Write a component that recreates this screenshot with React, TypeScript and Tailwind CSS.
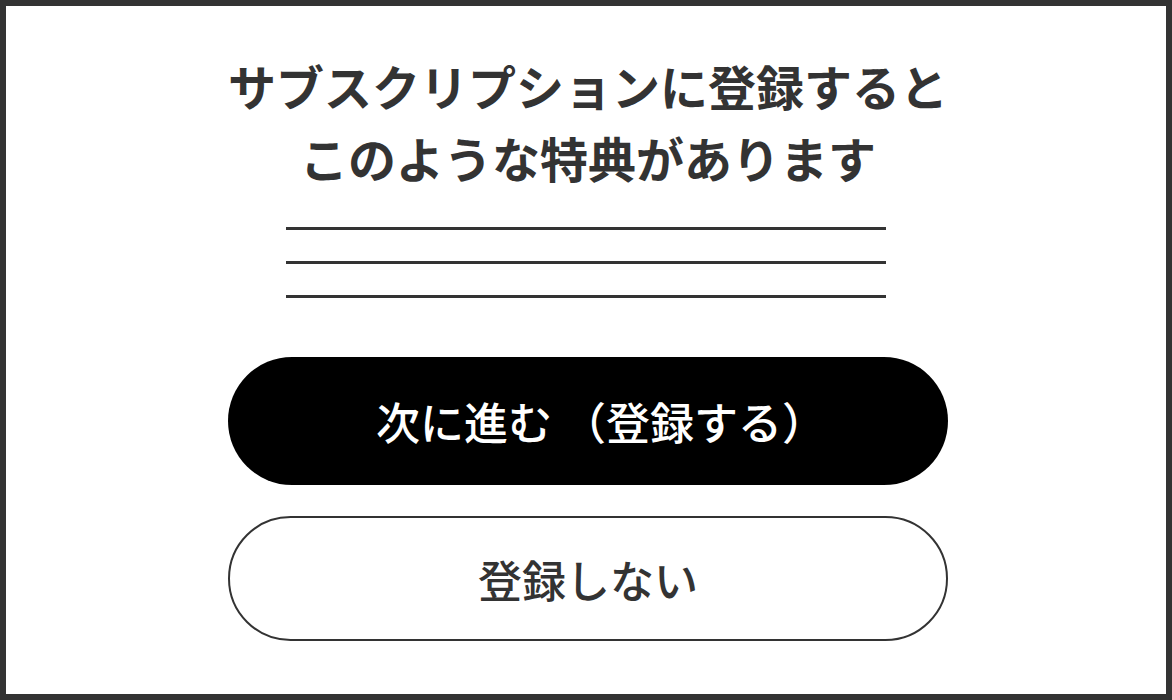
import React from "react";

const SubscribePrompt = () => {
  return (
    <div className="w-[1172px] h-[700px] border-[6px] border-[#333333] bg-white pl-[4px] flex flex-col items-center font-['Noto_Sans_CJK_JP','Noto_Sans',sans-serif]">
      <h2 className="mt-[43px] text-center font-bold text-[48px] leading-[72px] text-[#333333]">
        サブスクリプションに登録すると
        <br />
        このような特典があります
      </h2>
      <div className="mt-[34px] -ml-[4px] flex flex-col gap-[31px] w-[600px]">
        <div className="h-[3px] bg-[#333333]" />
        <div className="h-[3px] bg-[#333333]" />
        <div className="h-[3px] bg-[#333333]" />
      </div>
      <button className="mt-[59px] w-[720px] h-[128px] rounded-full bg-black text-white text-[44px] font-medium pl-[26px] flex items-center justify-center">
        次に進む （登録する）
      </button>
      <button className="mt-[31px] w-[720px] h-[125px] rounded-full border-2 border-[#333333] bg-white text-[#333333] text-[44px] font-medium flex items-center justify-center">
        登録しない
      </button>
    </div>
  );
};

export default function App() {
  return <SubscribePrompt />;
}
